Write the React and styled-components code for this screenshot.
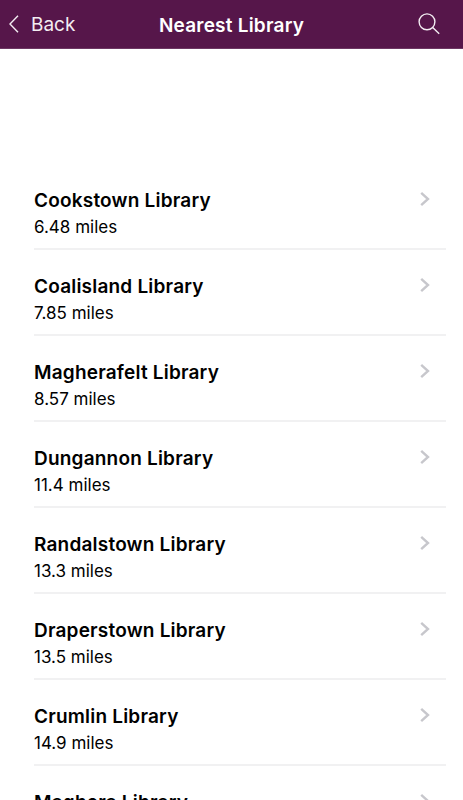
import React from 'react';
import styled, { createGlobalStyle } from 'styled-components'

const libraries = [
    { name: 'Cookstown Library', miles: '6.48' },
    { name: 'Coalisland Library', miles: '7.85' },
    { name: 'Magherafelt Library', miles: '8.57' },
    { name: 'Dungannon Library', miles: '11.4' },
    { name: 'Randalstown Library', miles: '13.3' },
    { name: 'Draperstown Library', miles: '13.5' },
    { name: 'Crumlin Library', miles: '14.9' },
    { name: 'Maghera Library', miles: '15.2' },
]

const LibraryRow = ({ library }) => {
    return (
        <Row>
            <div className="info">
                <h2 className="name">{library.name}</h2>
                <p className="distance">{library.miles} miles</p>
            </div>
            <Chevron viewBox="0 0 10 16">
                <path d="M1.2 1.8 L8 8 L1.2 14.2" />
            </Chevron>
        </Row>
    )
}

const App = () => {
    return (
        <Screen>
            <GlobalStyle />
            <Header>
                <BackButton>
                    <svg width="10" height="18" viewBox="0 0 10 18">
                        <path d="M9 0.7 L1 9 L9 17.3" />
                    </svg>
                    <span>Back</span>
                </BackButton>
                <Title>Nearest Library</Title>
                <SearchButton aria-label="Search">
                    <svg width="22" height="22" viewBox="0 0 22 22">
                        <circle cx="9" cy="8.8" r="7.9" />
                        <path d="M14.7 14.5 L21.2 20.8" />
                    </svg>
                </SearchButton>
            </Header>
            <List>
                {libraries.map((library) => (
                    <LibraryRow key={library.name} library={library} />
                ))}
            </List>
        </Screen>
    )
}

export default App;

const GlobalStyle = createGlobalStyle`
    * {
        box-sizing: border-box;
    }

    body {
        margin: 0;
        background: #fff;
        font-family: Inter, 'Liberation Sans', sans-serif;
    }
`

const Screen = styled.div`
    height: 100vh;
    overflow: hidden;
    background: #fff;
`

const Header = styled.header`
    display: grid;
    grid-template-columns: 1fr auto 1fr;
    align-items: center;
    height: 49px;
    padding: 0 23px 0 9px;
    border-bottom: 1px solid #6d3763;
    background: #56164a;
    color: #fff;

    svg {
        display: block;
        fill: none;
        stroke: #f3edf2;
        stroke-width: 1.4;
    }
`

const BackButton = styled.button`
    display: flex;
    align-items: center;
    gap: 12px;
    padding: 0;
    border: 0;
    background: none;
    color: #f3edf2;
    font: 400 19px Inter, sans-serif;

    span {
        padding-top: 1px;
    }
`

const Title = styled.h1`
    margin: 0 -7px 0 7px;
    padding-top: 3px;
    font-size: 19px;
    font-weight: 600;
    letter-spacing: 0.22px;
`

const SearchButton = styled.button`
    justify-self: end;
    padding: 0;
    border: 0;
    background: none;
`

const List = styled.ul`
    margin: 0;
    padding: 115px 17px 0 34px;
    list-style: none;
`

const Row = styled.li`
    display: flex;
    justify-content: space-between;
    height: 86px;
    padding: 24px 16px 0 0;
    border-bottom: 2px solid #f1f1f2;
    color: #000;

    .name {
        margin: 0;
        font-size: 19px;
        font-weight: 600;
        line-height: 26px;
        letter-spacing: 0.2px;
    }

    .distance {
        margin: 0;
        font-size: 17px;
        line-height: 26px;
    }
`

const Chevron = styled.svg`
    width: 10px;
    height: 16px;
    margin-top: 3px;
    fill: none;
    stroke: #c7c7cc;
    stroke-width: 2.4;
`
